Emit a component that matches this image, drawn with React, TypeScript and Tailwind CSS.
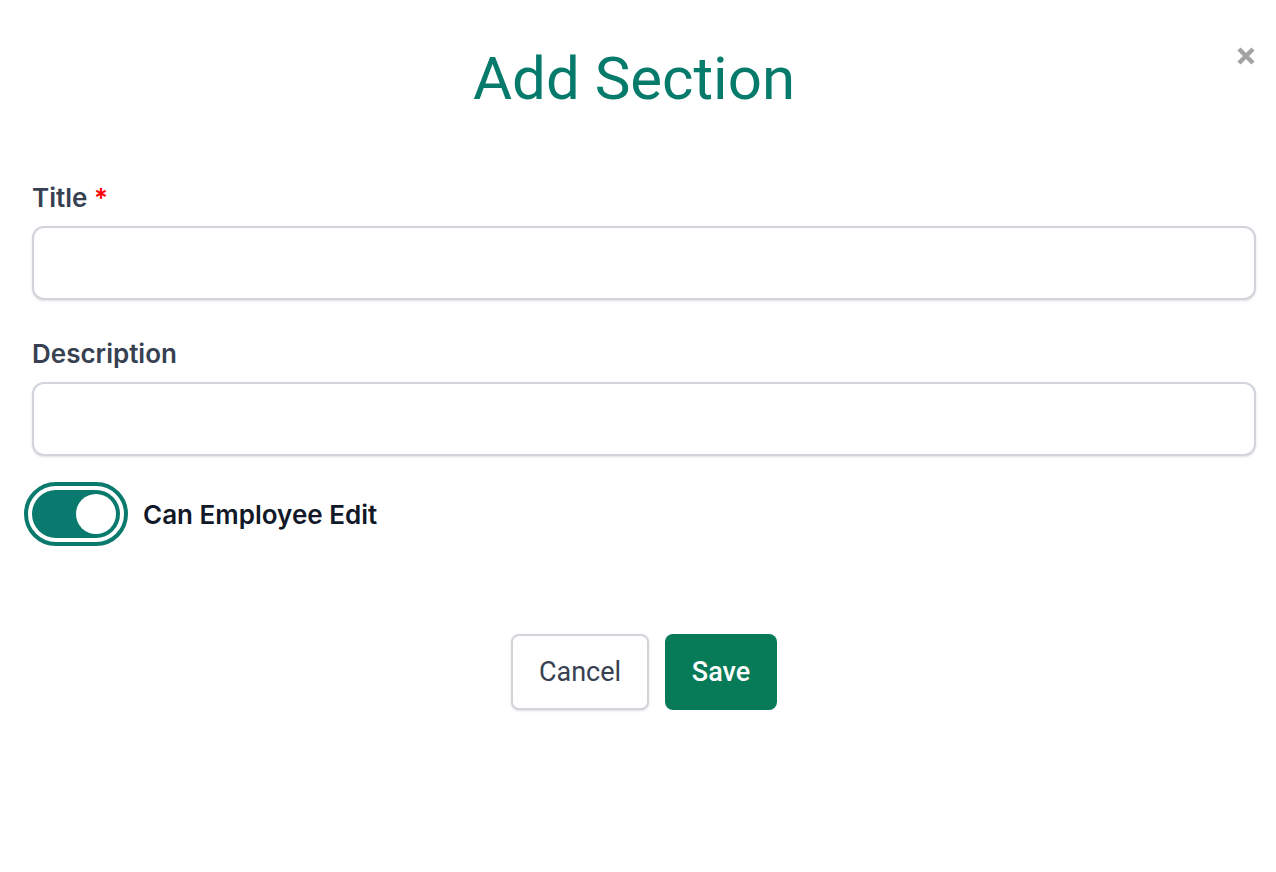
import { useState } from 'react'

export default function App() {
  const [canEdit, setCanEdit] = useState(true)

  return (
    <div className="relative min-h-screen w-full bg-white pt-[43px]" style={{ fontFamily: 'Roboto, sans-serif' }}>
      {/* Close button */}
      <button className="absolute right-[20px] top-[46px] text-[#a3a3a3]" aria-label="Close">
        <svg width="20" height="20" viewBox="0 0 20 20">
          <path d="M3 3 L17 17 M17 3 L3 17" stroke="currentColor" strokeWidth="4.5" strokeLinecap="butt" />
        </svg>
      </button>

      <div className="pr-2">
        <h1 className="text-center text-[60px] leading-[72px] font-normal text-[#067b6c]">Add Section</h1>
      </div>

      <form className="mt-[67px] pl-8 pr-5" onSubmit={e => e.preventDefault()}>
        {/* Title */}
        <label className="block font-['Inter',sans-serif] text-[26px] leading-[32px] font-semibold text-[#374151]">
          Title <span className="text-[#ff0000]">*</span>
        </label>
        <input
          type="text"
          className="mt-[12px] block h-[74px] w-full rounded-[12px] border-2 border-[#d1d5db] bg-white px-4 text-[24px] shadow-sm outline-none"
        />

        {/* Description */}
        <label className="mt-[38px] block font-['Inter',sans-serif] text-[26px] leading-[32px] font-semibold text-[#374151]">
          Description
        </label>
        <input
          type="text"
          className="mt-[12px] block h-[74px] w-full rounded-[12px] border-2 border-[#d1d5db] bg-white px-4 text-[24px] shadow-sm outline-none"
        />

        {/* Toggle */}
        <div className="mt-[26px] -ml-[8px] flex items-center gap-[15px]">
          <button
            type="button"
            onClick={() => setCanEdit(!canEdit)}
            className="flex h-[64px] w-[104px] items-center justify-center rounded-full border-[4px] border-[#0a7a6e] bg-white"
          >
            <span className={`flex h-[48px] w-[88px] items-center rounded-full px-[4px] ${canEdit ? 'justify-end bg-[#0a7a6e]' : 'justify-start bg-gray-300'}`}>
              <span className="h-[40px] w-[40px] rounded-full bg-white" />
            </span>
          </button>
          <span className="font-['Inter',sans-serif] text-[26px] font-semibold text-[#111827]">Can Employee Edit</span>
        </div>

        {/* Actions */}
        <div className="mt-[88px] flex justify-center gap-4">
          <button
            type="button"
            className="h-[76px] w-[138px] rounded-[8px] border-2 border-[#d1d5db] bg-white text-[27px] text-[#374151] shadow-sm"
          >
            Cancel
          </button>
          <button
            type="submit"
            className="h-[76px] w-[112px] rounded-[8px] bg-[#077a58] text-[27px] font-medium text-white"
          >
            Save
          </button>
        </div>
      </form>
    </div>
  )
}
